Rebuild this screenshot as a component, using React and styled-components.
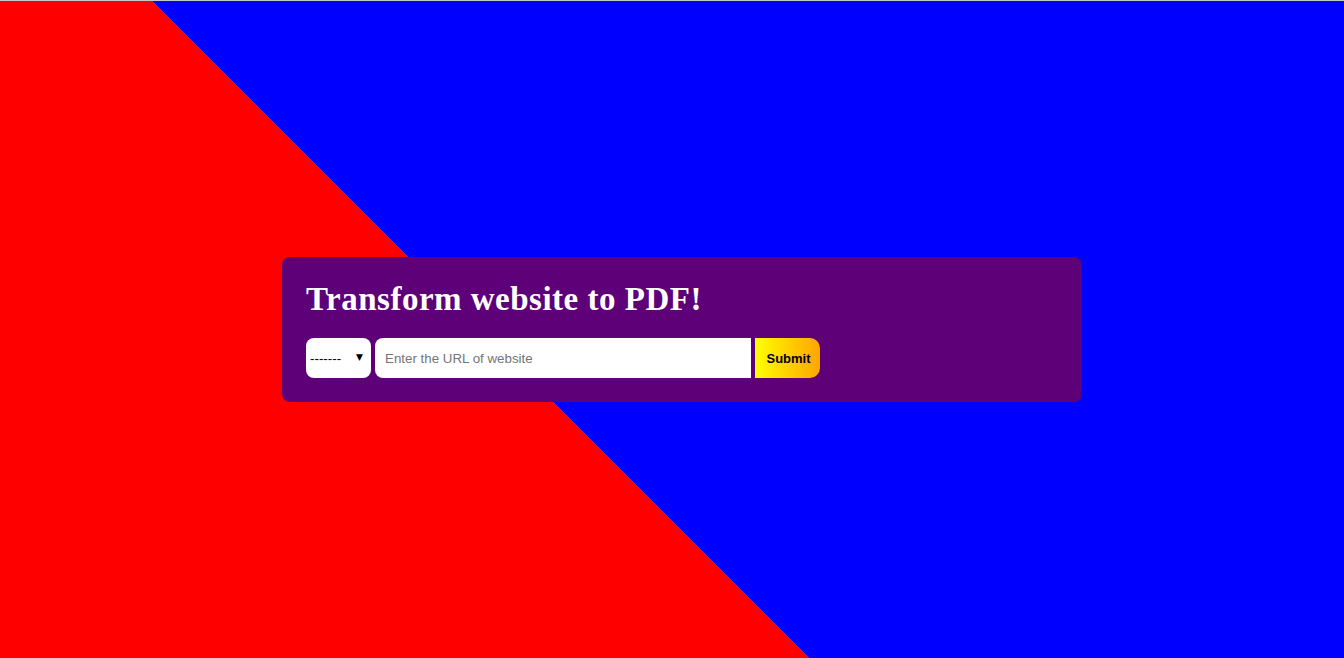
import styled, { createGlobalStyle } from 'styled-components';

const GlobalStyle = createGlobalStyle`
    html, body {
        margin: 0;
        padding: 0;
        height: 100%;
    }

    #root {
        height: 100%;
    }
`;

function App () {
    return (
        <>
            <GlobalStyle />
            <Page>
                <Card>
                    <Title>Transform website to PDF!</Title>
                    <Form onSubmit={e => e.preventDefault()}>
                        <SelectWrap>
                            <Select defaultValue=''>
                                <option value=''>-------</option>
                                <option value='a4'>A4</option>
                                <option value='letter'>Letter</option>
                            </Select>
                            <Arrow>▼</Arrow>
                        </SelectWrap>
                        <UrlInput type='text' placeholder='Enter the URL of website' />
                        <SubmitButton type='submit'>Submit</SubmitButton>
                    </Form>
                </Card>
            </Page>
        </>
    );
}

const Page = styled.div`
    box-sizing: border-box;
    width: 100%;
    height: 658px;
    border-top: 1px solid #c8c8c8;
    background: linear-gradient(45deg, #ff0000 40.45%, #0000ff 40.45%);

    display: flex;
    align-items: center;
    justify-content: center;
    padding-left: 20px;
`;

const Card = styled.div`
    box-sizing: border-box;
    width: 800px;
    height: 145px;
    padding: 24px;
    border-radius: 8px;
    background-color: #5e0078;
`;

const Title = styled.h1`
    margin: 0 0 20px 0;
    height: 37px;
    font-family: "Liberation Serif", "Times New Roman", serif;
    font-weight: 700;
    font-size: 33px;
    line-height: 37px;
    letter-spacing: 0.5px;
    color: #ffffff;
`;

const Form = styled.form`
    display: flex;
    align-items: center;
    gap: 4px;
    height: 40px;
`;

const SelectWrap = styled.div`
    position: relative;
    width: 65px;
    height: 40px;
`;

const Select = styled.select`
    appearance: none;
    box-sizing: border-box;
    width: 100%;
    height: 100%;
    border: none;
    border-radius: 8px;
    padding: 0 0 0 4px;
    background: #ffffff;
    font-family: "Liberation Sans", Arial, sans-serif;
    font-size: 13.33px;
    color: #000000;
    outline: none;
`;

const Arrow = styled.span`
    position: absolute;
    right: 8px;
    top: 14px;
    font-size: 9px;
    color: #000000;
    pointer-events: none;
    font-family: "DejaVu Sans", sans-serif;
`;

const UrlInput = styled.input`
    box-sizing: border-box;
    width: 376px;
    height: 40px;
    border: none;
    border-radius: 8px 0 0 8px;
    padding: 0 10px;
    background: #ffffff;
    font-family: "Liberation Sans", Arial, sans-serif;
    font-size: 13.33px;
    outline: none;

    &::placeholder {
        color: #757575;
    }
`;

const SubmitButton = styled.button`
    box-sizing: border-box;
    width: 65px;
    height: 40px;
    border: none;
    border-radius: 0 10px 10px 0;
    padding: 0 0 0 2px;
    background: linear-gradient(to right, #ffff00, #ffa500);
    font-family: "Liberation Sans", Arial, sans-serif;
    font-weight: 700;
    font-size: 13px;
    color: #000000;
    cursor: pointer;
`;

export default App;
